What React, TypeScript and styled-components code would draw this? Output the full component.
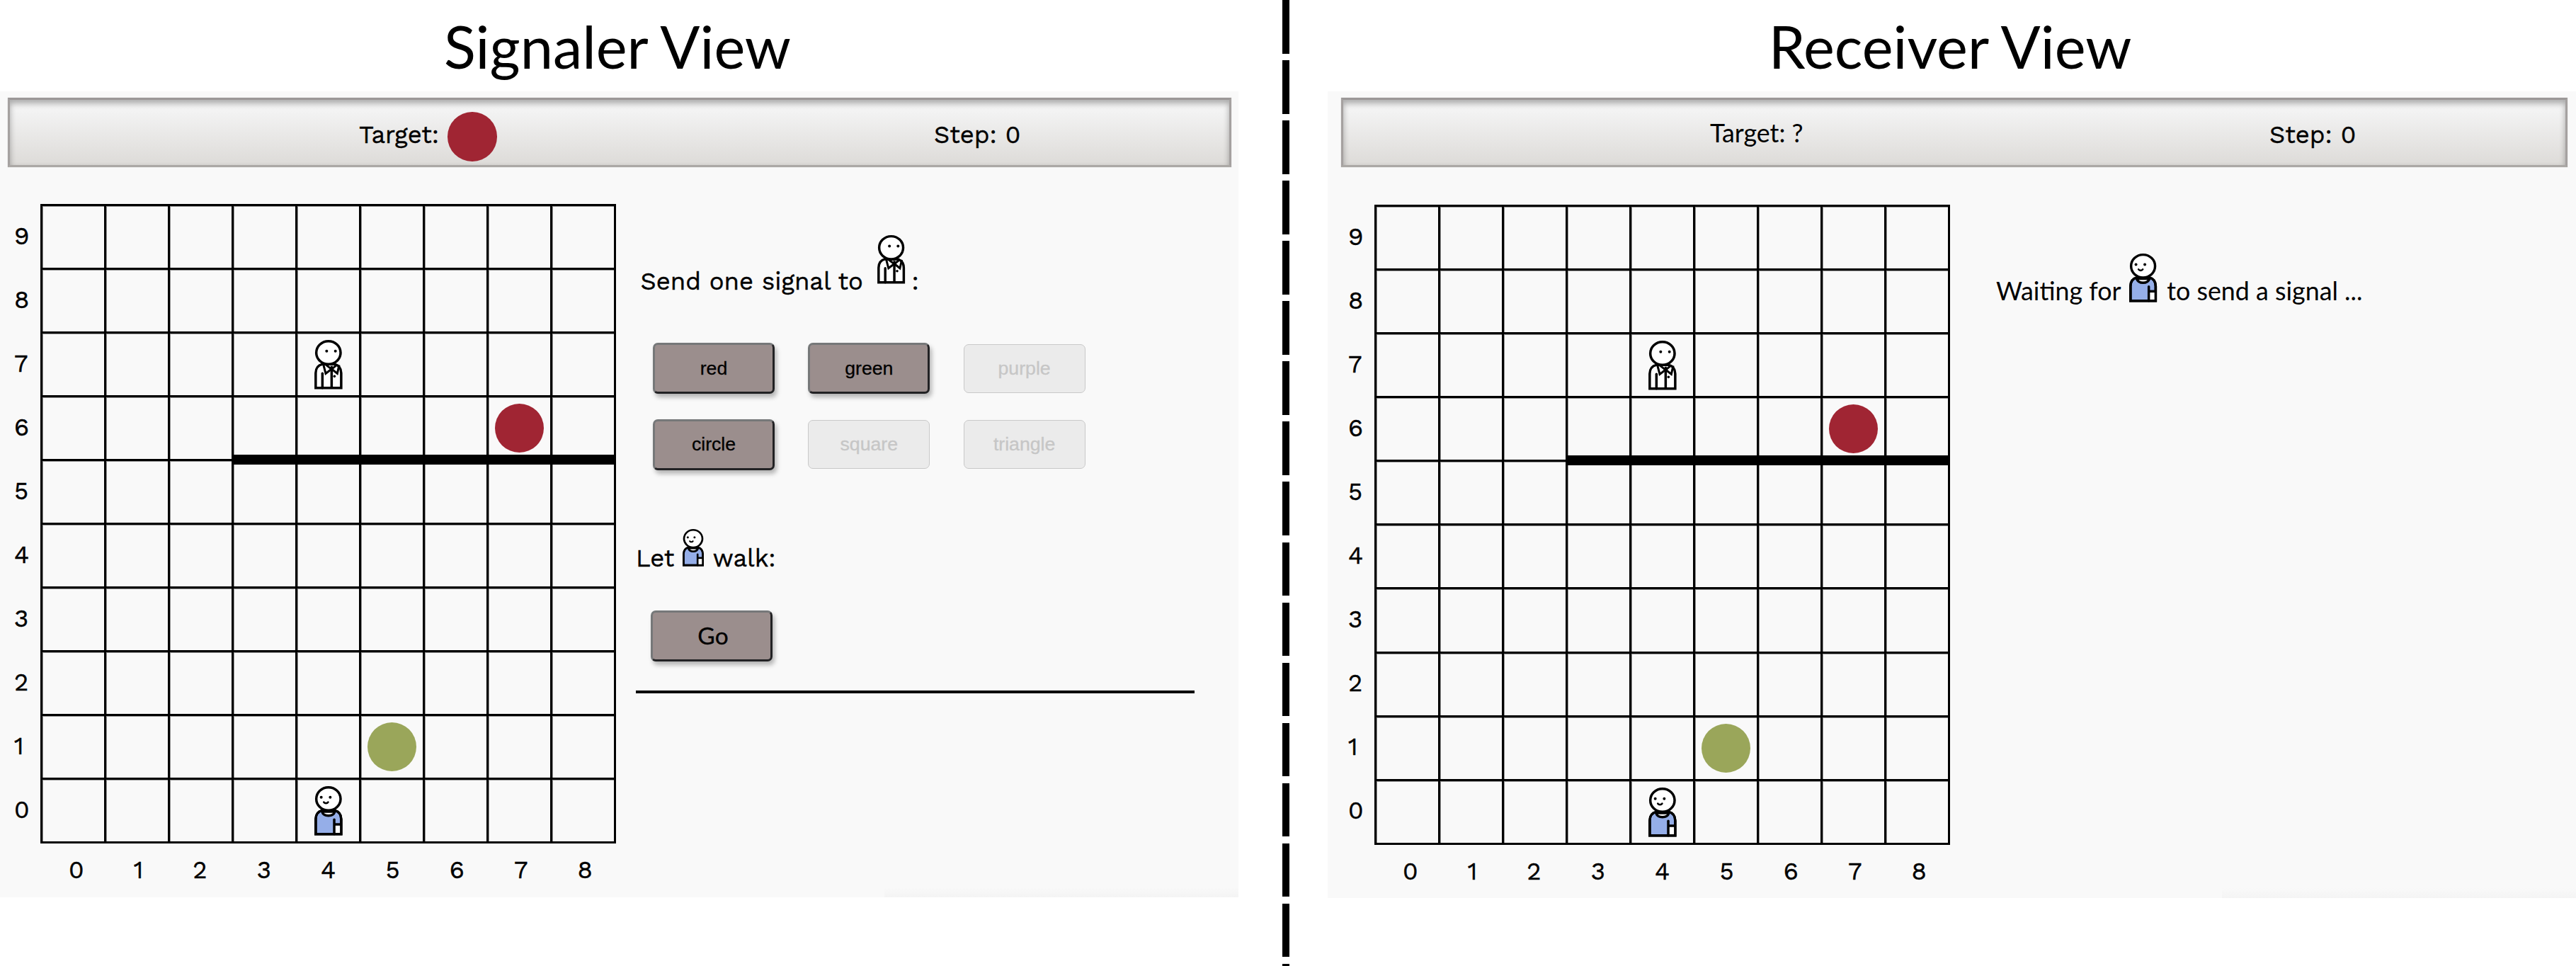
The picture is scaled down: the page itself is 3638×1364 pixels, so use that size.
import React from "react";
import styled, { createGlobalStyle, css } from "styled-components";

const WORK = `"Work Sans", "Open Sans", sans-serif`;
const LATO = `Lato, "Open Sans", sans-serif`;
const ARIAL = `"Liberation Sans", Arial, sans-serif`;

const GlobalStyle = createGlobalStyle`
  *, *::before, *::after { box-sizing: border-box; }
  body { margin: 0; background: #fff; color: #000; }
`;

const Page = styled.main`
  display: flex;
  width: 3638px;
  height: 1364px;
  overflow: hidden;
  background: #fff;
`;

const View = styled.section<{ $width: number }>`
  display: flex;
  flex-direction: column;
  flex: none;
  width: ${(p) => p.$width}px;
`;

const Title = styled.h1`
  margin: 0;
  height: 129px;
  padding-right: 5px;
  text-align: center;
  font: 400 83px / 131px ${LATO};
`;

const Panel = styled.div<{ $height: number }>`
  display: flex;
  flex-direction: column;
  height: ${(p) => p.$height}px;
  padding-top: 9px;
  background:
    linear-gradient(to bottom, rgba(244, 244, 244, 0), #f4f4f4) right bottom / 500px 14px no-repeat,
    #f9f9f9;
`;

const StatusBar = styled.header<{ $left: number; $width: number; $columns: string }>`
  display: grid;
  grid-template-columns: ${(p) => p.$columns};
  align-items: center;
  flex: none;
  width: ${(p) => p.$width}px;
  height: 98px;
  margin-left: ${(p) => p.$left}px;
  border: 3px solid;
  border-color: #9b9797 #a5a1a0 #aba8a5 #a5a1a0;
  background: linear-gradient(to bottom, #f8f8f8 0%, #f2f2f2 20%, #dddbd8 100%);
  box-shadow: inset 0 5px 8px rgba(0, 0, 0, 0.32), 0 0 1px rgba(0, 0, 0, 0.25);
`;

const Status = styled.div<{ $shift?: number }>`
  display: flex;
  align-items: center;
  grid-column: auto;
  padding-top: ${(p) => p.$shift ?? 6}px;
`;

const Label = styled.span<{ $lato?: boolean }>`
  white-space: pre;
  font: 400 34.7px / 40px ${WORK};
  -webkit-text-stroke: 0.4px #000;
  ${(p) =>
    p.$lato &&
    css`
      font: 400 35.8px / 40px ${LATO};
      -webkit-text-stroke: 0;
    `}
`;

const Disc = styled.span<{ $color: string }>`
  width: 69.5px;
  height: 69.5px;
  border-radius: 50%;
  background: ${(p) => p.$color};
`;

const TargetDisc = styled(Disc)`
  margin: 6px 0 0 12px;
`;

const Workspace = styled.div<{ $top: number }>`
  display: flex;
  align-items: flex-start;
  padding-top: ${(p) => p.$top}px;
`;

const YAxis = styled.div<{ $left: number; $width: number }>`
  display: grid;
  grid-auto-rows: 90px;
  flex: none;
  align-items: center;
  width: ${(p) => p.$width}px;
  padding-left: ${(p) => p.$left}px;
`;

const BoardColumn = styled.div`
  display: flex;
  flex-direction: column;
  flex: none;
`;

const Board = styled.div<{ $rows: string }>`
  position: relative;
  display: grid;
  grid-template-columns: repeat(9, 87px);
  grid-template-rows: ${(p) => p.$rows};
  gap: 3px;
  padding: 3px;
  background: #000;
`;

const Cell = styled.div`
  display: flex;
  align-items: center;
  justify-content: center;
  background: #f9f9f9;
  box-shadow: inset 1px 1px 0 rgba(0, 0, 0, 0.4);
`;

const Wall = styled.div<{ $top: number }>`
  position: absolute;
  left: 270px;
  right: 0;
  top: ${(p) => p.$top}px;
  height: 14px;
  background: #000;
`;

const XAxis = styled.div`
  display: flex;
  justify-content: space-between;
  margin-top: 17px;
  padding: 0 33px 0 40px;
`;

const Side = styled.div<{ $left: number; $top: number }>`
  display: flex;
  flex-direction: column;
  padding: ${(p) => p.$top}px 0 0 ${(p) => p.$left}px;
`;

const Sentence = styled.div<{ $indent?: number; $top?: number }>`
  display: flex;
  align-items: flex-end;
  margin-top: ${(p) => p.$top ?? 0}px;
  padding-left: ${(p) => p.$indent ?? 0}px;
`;

const FigureSlot = styled.span<{ $width: number; $before: number; $after: number; $lift: number }>`
  display: flex;
  flex: none;
  width: ${(p) => p.$width}px;
  margin: 0 ${(p) => p.$after}px ${(p) => p.$lift}px ${(p) => p.$before}px;
`;

const Figure = styled.svg`
  display: block;
  width: 100%;
  height: auto;
  overflow: visible;
`;

const CellFigure = styled.span`
  width: 39.7px;
  margin-left: 1px;
`;

const SignalGrid = styled.div`
  display: grid;
  grid-template-columns: repeat(3, 172px);
  grid-auto-rows: 72px;
  align-items: center;
  gap: 35.5px 47.3px;
  margin: 67px 0 0 24px;
`;

const ActionButton = styled.button`
  width: 172px;
  height: 72px;
  padding: 0;
  border: 3px solid;
  border-color: #767879 #222224 #222224 #767879;
  border-radius: 7px;
  background: #9b8e8d;
  box-shadow: 3px 5px 6px rgba(0, 0, 0, 0.28);
  color: #000;
  font: 400 26.67px / 1 ${ARIAL};
  -webkit-text-stroke: 0.3px;

  &:disabled {
    height: 69px;
    border: 1.5px solid #c9c9c9;
    background: #ebebeb;
    box-shadow: none;
    color: #c6c6c6;
  }
`;

const GoButton = styled(ActionButton)`
  margin: 54.5px 0 0 21px;
  padding-left: 4px;
  font: 400 33.5px / 1 ${LATO};
`;

const Rule = styled.hr`
  width: 789px;
  height: 4px;
  margin: 40.5px 0 0;
  border: 0;
  background: #000;
`;

const Divider = styled.div`
  flex: none;
  width: 10px;
  margin: 0 54px 0 62px;
  background: repeating-linear-gradient(to bottom, #000 0 75.6px, #fff 75.6px 85.06px);
`;

function Partner() {
  return (
    <Figure viewBox="0 0 119 209" fill="none" stroke="#000" strokeWidth={10.5}>
      <path d="M5.500 203V140C6 121 15 107 33 103H86C104 107 113 121 113.500 140V203Z" fill="#fff" />
      <path d="M34 142V203" strokeLinecap="round" />
      <path d="M73 118V203" />
      <path d="M38 104L48 142L73 123L97 142L105 106" strokeWidth={9} />
      <path d="M47 104L73 124L97 104M73 110V130" strokeWidth={9} />
      <circle cx={85} cy={154} r={5.500} fill="#000" stroke="none" />
      <ellipse cx={59.500} cy={54} rx={51.500} ry={49} fill="#fff" />
      <circle cx={52} cy={47} r={6} fill="#000" stroke="none" />
      <circle cx={89} cy={47} r={6} fill="#000" stroke="none" />
    </Figure>
  );
}

function Walker() {
  return (
    <Figure viewBox="0 0 119 209" fill="none" stroke="#000" strokeWidth={10.5}>
      <path d="M5.500 203V140C6 121 15 107 33 103H86C104 107 113 121 113.500 140V203Z" fill="#95aee8" />
      <path d="M84 162H113V203H84Z" fill="#fff" stroke="none" />
      <path d="M84 142V203" strokeLinecap="round" />
      <path d="M84 162H113.500" />
      <path d="M5.500 203V140C6 121 15 107 33 103H86C104 107 113 121 113.500 140V203Z" />
      <path d="M32 108C40 131 79 131 87 108Z" fill="#fff" />
      <ellipse cx={59.500} cy={54} rx={51.500} ry={49} fill="#fff" />
      <circle cx={29} cy={47} r={6} fill="#000" stroke="none" />
      <circle cx={67} cy={47} r={6} fill="#000" stroke="none" />
      <path d="M40 68C44 74 54 74 58 68" strokeWidth={8} strokeLinecap="round" />
    </Figure>
  );
}

const RED = "#a02533";
const GREEN = "#9aa65a";

const occupants: Record<string, React.ReactNode> = {
  "4,7": <CellFigure><Partner /></CellFigure>,
  "7,6": <Disc $color={RED} />,
  "5,1": <Disc $color={GREEN} />,
  "4,0": <CellFigure><Walker /></CellFigure>,
};

const rowNumbers = [9, 8, 7, 6, 5, 4, 3, 2, 1, 0];
const columnNumbers = [0, 1, 2, 3, 4, 5, 6, 7, 8];

function Arena(props: { axisLeft: number; axisWidth: number; rows: string; wallTop: number }) {
  return (
    <>
      <YAxis $left={props.axisLeft} $width={props.axisWidth}>
        {rowNumbers.map((n) => (
          <Label key={n}>{n}</Label>
        ))}
      </YAxis>
      <BoardColumn>
        <Board $rows={props.rows}>
          {rowNumbers.map((y) =>
            columnNumbers.map((x) => <Cell key={`${x},${y}`}>{occupants[`${x},${y}`]}</Cell>)
          )}
          <Wall $top={props.wallTop} />
        </Board>
        <XAxis>
          {columnNumbers.map((n) => (
            <Label key={n}>{n}</Label>
          ))}
        </XAxis>
      </BoardColumn>
    </>
  );
}

const signals = [
  { word: "red", enabled: true },
  { word: "green", enabled: true },
  { word: "purple", enabled: false },
  { word: "circle", enabled: true },
  { word: "square", enabled: false },
  { word: "triangle", enabled: false },
];

function SignalerView() {
  return (
    <View $width={1749}>
      <Title>Signaler View</Title>
      <Panel $height={1138}>
        <StatusBar $left={11} $width={1728} $columns="493px 812px 1fr">
          <span />
          <Status>
            <Label>Target:</Label>
            <TargetDisc $color={RED} />
          </Status>
          <Status>
            <Label>Step: 0</Label>
          </Status>
        </StatusBar>
        <Workspace $top={52}>
          <Arena axisLeft={20} axisWidth={57} rows="repeat(10, 87px)" wallTop={354} />
          <Side $left={28} $top={43.5}>
            <Sentence $indent={6.5}>
              <Label>Send one signal to</Label>
              <FigureSlot $width={39.2} $before={20.5} $after={9} $lift={17}>
                <Partner />
              </FigureSlot>
              <Label>:</Label>
            </Sentence>
            <SignalGrid>
              {signals.map((s) => (
                <ActionButton key={s.word} disabled={!s.enabled}>
                  {s.word}
                </ActionButton>
              ))}
            </SignalGrid>
            <Sentence $top={83}>
              <Label>Let</Label>
              <FigureSlot $width={30} $before={12} $after={12.5} $lift={8}>
                <Walker />
              </FigureSlot>
              <Label>walk:</Label>
            </Sentence>
            <GoButton>Go</GoButton>
            <Rule />
          </Side>
        </Workspace>
      </Panel>
    </View>
  );
}

function ReceiverView() {
  return (
    <View $width={1763}>
      <Title>Receiver View</Title>
      <Panel $height={1139}>
        <StatusBar $left={19} $width={1732} $columns="518px 790px 1fr">
          <span />
          <Status $shift={2}>
            <Label $lato>Target: ?</Label>
          </Status>
          <Status>
            <Label>Step: 0</Label>
          </Status>
        </StatusBar>
        <Workspace $top={53}>
          <Arena axisLeft={29} axisWidth={66} rows="repeat(6, 87px) 88px repeat(3, 87px)" wallTop={354} />
          <Side $left={65} $top={68.5}>
            <Sentence>
              <Label $lato>Waiting for</Label>
              <FigureSlot $width={39.2} $before={11} $after={14.5} $lift={4.7}>
                <Walker />
              </FigureSlot>
              <Label $lato>to send a signal ...</Label>
            </Sentence>
          </Side>
        </Workspace>
      </Panel>
    </View>
  );
}

export default function App() {
  return (
    <>
      <GlobalStyle />
      <Page>
        <SignalerView />
        <Divider />
        <ReceiverView />
      </Page>
    </>
  );
}
